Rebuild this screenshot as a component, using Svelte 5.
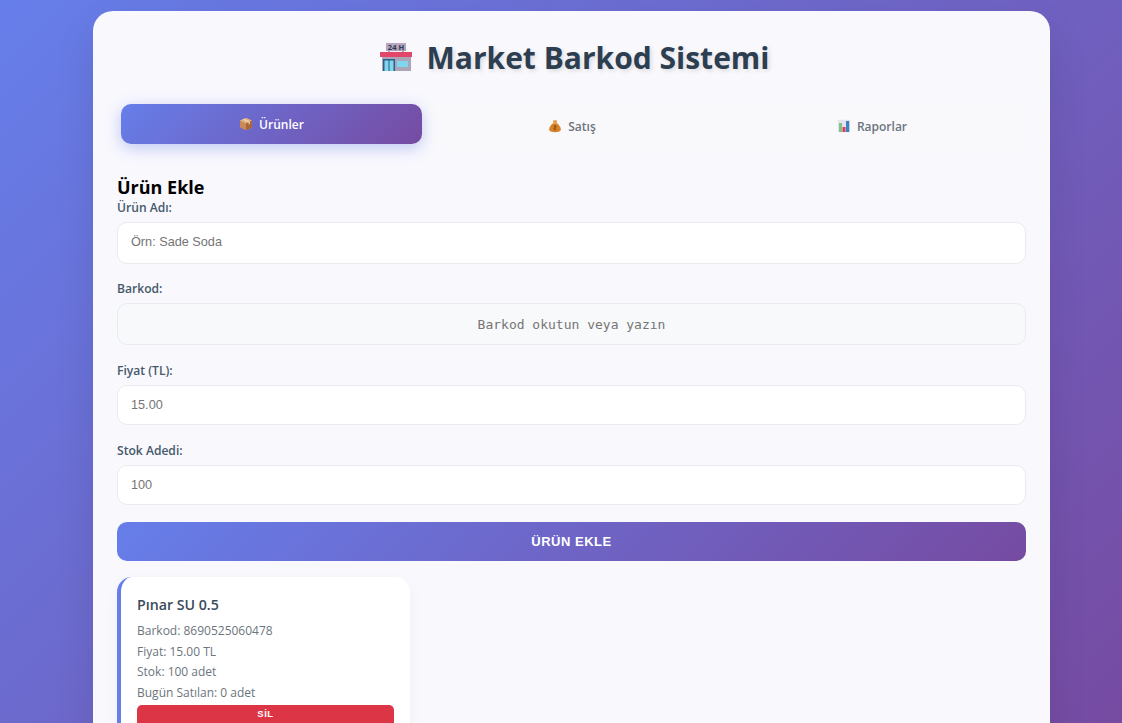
<script lang="ts">
  const tabs = [
    { id: 'urunler', label: 'Ürünler', active: true },
    { id: 'satis', label: 'Satış', active: false },
    { id: 'raporlar', label: 'Raporlar', active: false }
  ];

  const fields = [
    { label: 'Ürün Adı:', placeholder: 'Örn: Sade Soda', value: '', barcode: false },
    { label: 'Barkod:', placeholder: 'Barkod okutun veya yazın', value: '', barcode: true },
    { label: 'Fiyat (TL):', placeholder: '', value: '15.00', barcode: false },
    { label: 'Stok Adedi:', placeholder: '', value: '100', barcode: false }
  ];

  const products = [
    { name: 'Pınar SU 0.5', barcode: '8690525060478', price: '15.00', stock: 100, sold: 0 }
  ];
</script>

<div class="page">
  <main class="container">
    <h1>
      <svg class="store" viewBox="0 0 34 32" aria-hidden="true">
        <rect x="7" y="2" width="20" height="8" fill="#b9a6c0" />
        <path d="M10 10v2M24 10v2" stroke="#6f5f78" stroke-width="1" />
        <text x="17" y="8.600" text-anchor="middle" class="sign">24 H</text>
        <rect x="3" y="15" width="29" height="15" fill="#aaa6b8" />
        <path d="M1 11h32v5H1z" fill="#e2476a" />
        <rect x="4" y="18" width="12" height="12" fill="#2c5f86" />
        <rect x="5.500" y="19.500" width="4" height="10.500" fill="#7fd6ee" />
        <rect x="10.500" y="19.500" width="4" height="10.500" fill="#7fd6ee" />
        <rect x="18" y="20" width="11" height="6" fill="#7fd6ee" />
      </svg>
      <span>Market Barkod Sistemi</span>
    </h1>

    <nav class="tabs">
      {#each tabs as tab}
        <button class="tab" class:active={tab.active} type="button">
          {#if tab.id === 'urunler'}
            <svg class="ico" viewBox="0 0 14 14" aria-hidden="true">
              <path d="M7 1l6 2.600v7L7 13.200 1 10.600v-7z" fill="#c98a57" />
              <path d="M7 1l6 2.600L7 6.400 1 3.600z" fill="#e2b184" />
              <path d="M7 6.400v6.800l6-2.600v-7z" fill="#a9683a" />
              <path d="M3.600 2.400l6 2.800v2.200l1.200-.5V4.600l-6-2.900z" fill="#efd6b6" />
            </svg>
          {:else if tab.id === 'satis'}
            <svg class="ico" viewBox="0 0 14 14" aria-hidden="true">
              <path d="M5 1.200c.8.500 1.400.500 2 .1.600.4 1.200.4 2-.1L8.400 4H5.600z" fill="#d98a2b" />
              <path d="M5.600 3.800h2.800C11 6 12.800 8 12.800 10.200c0 2.200-2 3-5.800 3s-5.800-.8-5.800-3C1.200 8 3 6 5.600 3.800z" fill="#d8822a" />
              <rect x="5.500" y="3.500" width="3" height="1" fill="#f1c36a" />
              <path d="M7 6v5.500M5.700 7.500c0-1 2.600-1 2.600 0S5.700 8.800 5.700 9.800s2.600 1 2.600 0" stroke="#8a4a12" stroke-width="0.8" fill="none" />
            </svg>
          {:else}
            <svg class="ico" viewBox="0 0 14 14" aria-hidden="true">
              <rect x="0.800" y="0.800" width="12.400" height="12.400" fill="#e6e4ea" />
              <rect x="2" y="4" width="3" height="9" fill="#7cc487" />
              <rect x="5.500" y="8" width="3" height="5" fill="#d8405a" />
              <rect x="9" y="2" width="3.200" height="11" fill="#3f7fc4" />
            </svg>
          {/if}
          <span>{tab.label}</span>
        </button>
      {/each}
    </nav>

    <section>
      <h2>Ürün Ekle</h2>
      <form onsubmit={(e) => e.preventDefault()}>
        {#each fields as field}
          <div class="group">
            <label for={field.label}>{field.label}</label>
            <input
              id={field.label}
              class:barcode={field.barcode}
              type="text"
              placeholder={field.placeholder}
              value={field.value}
              disabled={field.barcode}
            />
          </div>
        {/each}
        <button class="submit" type="submit">ÜRÜN EKLE</button>
      </form>
    </section>

    <div class="grid">
      {#each products as product}
        <article class="card">
          <h3>{product.name}</h3>
          <p>Barkod: {product.barcode}</p>
          <p>Fiyat: {product.price} TL</p>
          <p>Stok: {product.stock} adet</p>
          <p>Bugün Satılan: {product.sold} adet</p>
          <button class="delete" type="button">SİL</button>
        </article>
      {/each}
    </div>
  </main>
</div>

<style>
:global(html), :global(body) {
  margin: 0;
  height: 723px;
  overflow: hidden;
}

.page {
  box-sizing: border-box;
  height: 723px;
  overflow: hidden;
  padding: 11px 72px 0 93px;
  background: linear-gradient(135deg, #667eea 0%, #764ba2 100%);
  font-family: "Open Sans", "Noto Sans", sans-serif;
}

.container {
  background: #f8f8fd;
  border-radius: 20px;
  padding: 24px;
  box-shadow: 0 20px 40px rgba(0, 0, 0, 0.1);
}

h1 {
  margin: 0 0 23px;
  padding-left: 5px;
  display: flex;
  align-items: center;
  justify-content: center;
  gap: 14px;
  height: 44px;
  font-size: 30px;
  font-weight: 700;
  color: #2c3e50;
  text-shadow: 2px 2px 4px rgba(0, 0, 0, 0.12);
}

.store {
  width: 34px;
  height: 32px;
}

.sign {
  font-family: "Open Sans", sans-serif;
  font-size: 7.500px;
  font-weight: 700;
  fill: #2c3e50;
}

.tabs {
  display: flex;
  padding: 4px;
  border-radius: 15px;
  background: #f9f9fc;
  margin-bottom: 25px;
}

.tab {
  flex: 1;
  height: 40px;
  display: flex;
  align-items: center;
  justify-content: center;
  gap: 6px;
  border: 0;
  border-radius: 10px;
  background: transparent;
  color: #6c757d;
  font-family: inherit;
  font-size: 12px;
  font-weight: 600;
}

.tab.active {
  flex: 0 0 301px;
  background: linear-gradient(135deg, #667eea, #764ba2);
  color: #fff;
  transform: translateY(-2px);
  box-shadow: 0 4px 15px rgba(102, 126, 234, 0.4);
}

.ico {
  width: 14px;
  height: 14px;
}

h2 {
  margin: 0;
  font-size: 18px;
  line-height: 24px;
  font-weight: 700;
  color: #000;
}

.group {
  margin-bottom: 17px;
}

.group:first-child {
  margin-bottom: 16px;
}

label {
  display: block;
  margin-bottom: 6px;
  font-size: 12.100px;
  line-height: 17px;
  font-weight: 600;
  color: #46586a;
}

input {
  box-sizing: border-box;
  width: 100%;
  height: 40px;
  padding: 0 13px;
  border: 1px solid #e9ecef;
  border-radius: 10px;
  background: #fff;
  font-family: "Liberation Sans", Arial, sans-serif;
  font-size: 12.700px;
  color: #757575;
}

.group:first-child input {
  height: 42px;
  padding-bottom: 2px;
}

input::placeholder {
  color: #757575;
}

input:disabled {
  opacity: 1;
}

input.barcode {
  background: #f8f9fa;
  text-align: center;
  font-family: "DejaVu Sans Mono", monospace;
  font-size: 13px;
  height: 42px;
}

.submit {
  display: block;
  width: 100%;
  height: 39px;
  border: 0;
  border-radius: 10px;
  background: linear-gradient(135deg, #667eea, #764ba2);
  color: #fff;
  font-family: "Liberation Sans", Arial, sans-serif;
  font-size: 13px;
  font-weight: 700;
  letter-spacing: 0.5px;
}

.grid {
  display: grid;
  grid-template-columns: repeat(3, 1fr);
  gap: 15px;
  margin-top: 16px;
}

.card {
  background: #fff;
  border-left: 4px solid #667eea;
  border-radius: 15px;
  padding: 16px;
  box-shadow: 0 5px 15px rgba(0, 0, 0, 0.04);
}

h3 {
  margin: 2px 0 6px;
  font-size: 14.200px;
  line-height: 20px;
  font-weight: 600;
  color: #3a4a5a;
}

.card p {
  margin: 0;
  font-size: 12px;
  line-height: 20.700px;
  color: #6c757d;
}

.delete {
  display: block;
  width: 100%;
  height: 30px;
  margin-top: 1px;
  border: 0;
  border-radius: 5px;
  background: #dc3545;
  color: #fff;
  font-family: "Liberation Sans", Arial, sans-serif;
  font-size: 9.500px;
  font-weight: 700;
  letter-spacing: 0.5px;
  padding: 0 0 12px;
}
</style>
